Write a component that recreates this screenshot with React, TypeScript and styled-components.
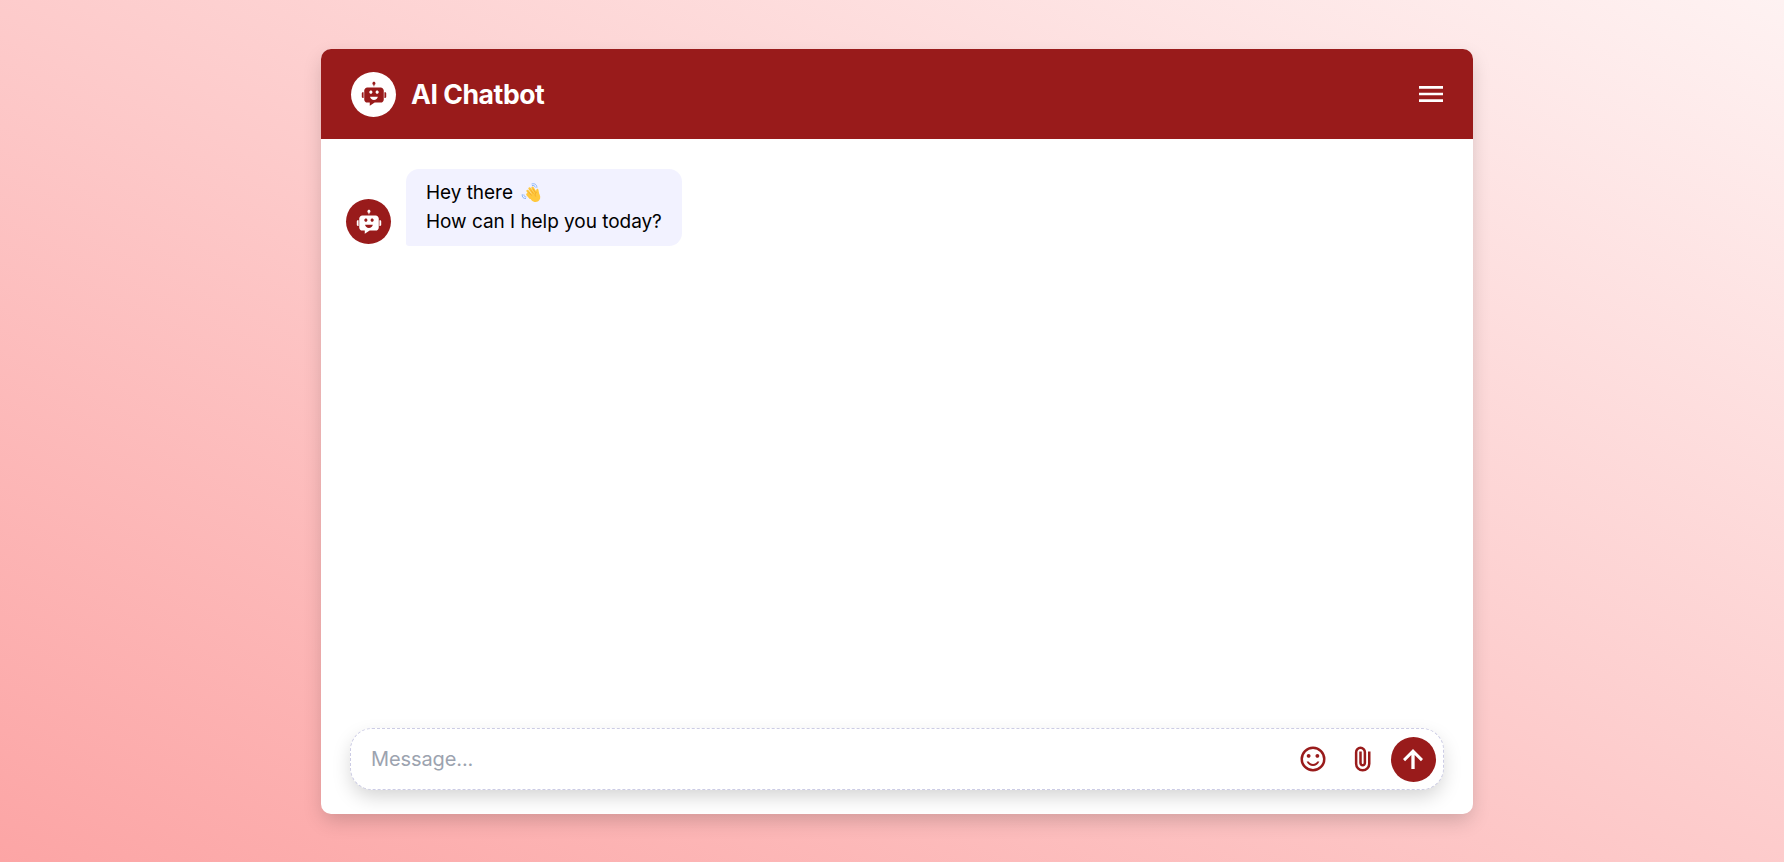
import React from "react";
import styled, { createGlobalStyle } from "styled-components";

const RED = "#991b1b";
const SHADOW = "0 8px 20px -2px rgba(0, 0, 0, 0.18)";

const GlobalStyle = createGlobalStyle`
  * { box-sizing: border-box; }
  body {
    margin: 0;
    font-family: Inter, "Liberation Sans", sans-serif;
  }
`;

const Page = styled.div`
  display: flex;
  justify-content: center;
  height: 100vh;
  padding: 49px 311px 48px 321px;
  background: linear-gradient(to top right, #fca5a5, #fef2f2);
`;

const Card = styled.main`
  display: flex;
  flex-direction: column;
  width: 1152px;
  border-radius: 10px;
  overflow: hidden;
  background: #fff;
  box-shadow: ${SHADOW};
`;

const Header = styled.header`
  display: flex;
  align-items: center;
  justify-content: space-between;
  height: 90px;
  flex: none;
  padding: 0 26px 0 30px;
  background: ${RED};
  color: #fff;
`;

const Brand = styled.div`
  display: flex;
  align-items: center;
  gap: 15px;
`;

const Title = styled.h1`
  margin: 0;
  font-size: 26.6px;
  font-weight: 700;
  line-height: 36px;
  letter-spacing: -0.45px;
`;

const Avatar = styled.div<{ $inverted?: boolean }>`
  display: flex;
  align-items: center;
  justify-content: center;
  width: 45px;
  height: 45px;
  flex: none;
  border-radius: 50%;
  background: ${(p) => (p.$inverted ? "#fff" : RED)};
  color: ${(p) => (p.$inverted ? RED : "#fff")};
`;

const IconButton = styled.button<{ $filled?: boolean }>`
  display: flex;
  align-items: center;
  justify-content: center;
  width: 45px;
  height: 45px;
  padding: 0 1px 0 0;
  border: 0;
  border-radius: 50%;
  background: ${(p) => (p.$filled ? RED : "transparent")};
  color: ${(p) => (p.$filled ? "#fff" : "inherit")};
`;

const MenuButton = styled(IconButton)`
  width: 32px;
  padding: 0;
`;

const Messages = styled.section`
  flex: 1;
  padding: 30px 25px;
`;

const MessageRow = styled.div`
  display: flex;
  align-items: flex-end;
  gap: 15px;
`;

const BotAvatar = styled(Avatar)`
  margin-bottom: 2px;
`;

const Bubble = styled.div`
  width: 276px;
  height: 77px;
  padding: 9px 20px;
  border-radius: 13px 13px 13px 3px;
  background: #f2f2ff;
  color: #000;
  font-size: 19px;
  line-height: 29px;
  letter-spacing: -0.04px;
  white-space: nowrap;
`;

const Footer = styled.footer`
  padding: 0 29px 24px;
`;

const Composer = styled.form`
  display: flex;
  align-items: center;
  height: 62px;
  padding: 0 7px 0 20px;
  border: 1px dashed #cccce5;
  border-radius: 22px;
  background: #fff;
  color: ${RED};
  box-shadow: ${SHADOW};
`;

const MessageInput = styled.input`
  flex: 1;
  min-width: 0;
  padding: 0;
  border: 0;
  outline: 0;
  background: transparent;
  font: 400 20px/30px Inter, "Liberation Sans", sans-serif;
  letter-spacing: -0.1px;
  &::placeholder { color: #9ca3af; opacity: 1; }
`;

const Controls = styled.div`
  display: flex;
  gap: 5px;
`;

const WaveSvg = styled.svg`
  display: inline-block;
  margin-left: 3px;
  vertical-align: -4px;
`;

const Bot = () => (
  <svg width="30" height="30" viewBox="0 0 1024 1024" fill="currentColor">
    <path d="M738.3 287.6H285.7c-59 0-106.8 47.8-106.8 106.8v303.1c0 59 47.8 106.8 106.8 106.8h81.5v111.1c0 .7.8 1.1 1.4.7l166.9-110.6 41.8-.8h117.4l43.6-.4c59 0 106.8-47.8 106.8-106.8V394.5c0-59-47.8-106.9-106.8-106.9zM351.7 448.2c0-29.5 23.9-53.5 53.5-53.5s53.5 23.9 53.5 53.5-23.9 53.5-53.5 53.5-53.5-23.9-53.5-53.5zm157.9 267.1c-67.8 0-123.8-47.5-132.3-109h264.6c-8.6 61.5-64.5 109-132.3 109zm110-213.7c-29.5 0-53.5-23.9-53.5-53.5s23.9-53.5 53.5-53.5 53.5 23.9 53.5 53.5-23.9 53.5-53.5 53.5zM867.2 644.5V453.1h26.5c19.4 0 35.1 15.7 35.1 35.1v121.1c0 19.4-15.7 35.1-35.1 35.1h-26.5zM95.2 609.4V488.2c0-19.4 15.7-35.1 35.1-35.1h26.5v191.3h-26.5c-19.4 0-35.1-15.7-35.1-35.1zM561.5 149.6c0 23.4-15.6 43.3-36.9 49.7v44.9h-30v-44.9c-21.4-6.5-36.9-26.3-36.9-49.7 0-28.6 23.3-51.9 51.9-51.9s51.9 23.3 51.9 51.9z" />
  </svg>
);

const icons = {
  menu: "M120-240v-80h720v80H120Zm0-200v-80h720v80H120Zm0-200v-80h720v80H120Z",
  smile:
    "M620-520q25 0 42.5-17.5T680-580q0-25-17.5-42.5T620-640q-25 0-42.5 17.5T560-580q0 25 17.5 42.5T620-520Zm-280 0q25 0 42.5-17.5T400-580q0-25-17.5-42.5T340-640q-25 0-42.5 17.5T280-580q0 25 17.5 42.5T340-520Zm140 260q68 0 123.5-38.5T684-400h-66q-22 37-58.5 58.5T480-320q-43 0-79.5-21.5T342-400h-66q25 63 80.5 101.5T480-260Zm0 180q-83 0-156-31.5T197-197q-54-54-85.5-127T80-480q0-83 31.5-156T197-763q54-54 127-85.5T480-880q83 0 156 31.5T763-763q54 54 85.5 127T880-480q0 83-31.5 156T763-197q-54 54-127 85.5T480-80Zm0-80q134 0 227-93t93-227q0-134-93-227t-227-93q-134 0-227 93t-93 227q0 134 93 227t227 93Z",
  clip: "M720-330q0 104-73 177T470-80q-104 0-177-73t-73-177v-370q0-75 52.5-127.5T400-880q75 0 127.5 52.5T580-700v350q0 46-32 78t-78 32q-46 0-78-32t-32-78v-370h80v370q0 13 8.5 21.5T470-320q13 0 21.5-8.5T500-350v-350q-1-42-29.5-71T400-800q-42 0-71 29t-29 71v370q-1 71 49 120.5T470-160q70 0 119-49.5T640-330v-390h80v390Z",
  up: "M427-160v-450L226-410l-66-67 320-323 320 323-66 67-201-200v450H427Z",
};

const Icon = ({ name, size = 30 }: { name: keyof typeof icons; size?: number }) => (
  <svg width={size} height={size} viewBox="0 -960 960 960" fill="currentColor">
    <path d={icons[name]} />
  </svg>
);

const Wave = () => (
  <WaveSvg width="20" height="20" viewBox="0 0 20 20" fill="none" role="img" aria-label="waving hand">
    <g stroke="#8ab4f8" strokeWidth="1" strokeLinecap="round">
      <path d="M11 .9c2.6-.8 4.9.6 4.9 3.4M11.3 2.5c1.5-.4 2.6.3 2.9 1.6" />
      <path d="M1.2 11.6c-.4 2.3 1 4 3.4 4M2.9 11.8c0 1.3.7 2 2 2.2" />
    </g>
    <g stroke="#ffc83d" strokeWidth="2.5" strokeLinecap="round">
      <path d="M6.4 11.4 9.4 14.8M6.6 8l5 6M8.6 5.5l5 7M11.6 4.8l4 6.5" />
    </g>
    <path d="m7.6 12.6 7.6-5.1c.1-2.1 2-2.2 2.3-.5.3 1.6.4 3 1.1 4.5 1.3 2.8.6 5.3-1.4 6.7-2.1 1.4-4.9.9-6.9-1.3Z" fill="#ffc83d" />
    <path d="m7.6 9 2.7 3.2M9.6 6.9l2.7 3.6M12.1 6.2l2.3 3.2M15.3 9.6c-1.4 1-1.5 2.3-.8 3.6" stroke="#e99a24" strokeWidth=".6" strokeLinecap="round" />
  </WaveSvg>
);

export default function App() {
  return (
    <>
      <GlobalStyle />
      <Page>
        <Card>
          <Header>
            <Brand>
              <Avatar $inverted>
                <Bot />
              </Avatar>
              <Title>AI Chatbot</Title>
            </Brand>
            <MenuButton aria-label="Menu">
              <Icon name="menu" size={32} />
            </MenuButton>
          </Header>
          <Messages>
            <MessageRow>
              <BotAvatar>
                <Bot />
              </BotAvatar>
              <Bubble>
                Hey there <Wave />
                <br />
                How can I help you today?
              </Bubble>
            </MessageRow>
          </Messages>
          <Footer>
            <Composer>
              <MessageInput placeholder="Message..." />
              <Controls>
                <IconButton type="button" aria-label="Emoji">
                  <Icon name="smile" />
                </IconButton>
                <IconButton type="button" aria-label="Attach file">
                  <Icon name="clip" />
                </IconButton>
                <IconButton type="button" $filled aria-label="Send">
                  <Icon name="up" />
                </IconButton>
              </Controls>
            </Composer>
          </Footer>
        </Card>
      </Page>
    </>
  );
}
